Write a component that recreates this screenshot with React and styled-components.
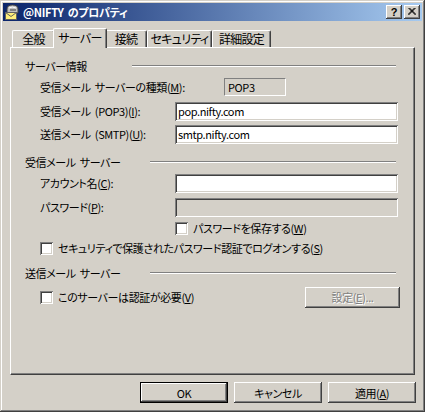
import React from "react";
import styled, { createGlobalStyle, css } from "styled-components";

const FACE = "#d4d0c8";

const GlobalStyle = createGlobalStyle`
  html, body { margin: 0; padding: 0; background: ${FACE}; }
  body {
    font-family: "Noto Sans CJK JP", "Noto Sans", sans-serif;
    font-size: 11px;
    letter-spacing: -0.4px;
    word-spacing: 2px;
    color: #000;
  }
  * { box-sizing: border-box; }
`;

// classic 3D bevels
const raised = css`
  box-shadow: inset -1px -1px #404040, inset 1px 1px #fff,
    inset -2px -2px #808080, inset 2px 2px ${FACE};
`;

const sunken = css`
  box-shadow: inset 1px 1px #808080, inset -1px -1px #fff,
    inset 2px 2px #404040, inset -2px -2px ${FACE};
`;

const Window = styled.div`
  width: 425px;
  height: 412px;
  padding: 3px;
  background: ${FACE};
  box-shadow: inset -1px -1px #404040, inset 1px 1px ${FACE},
    inset -2px -2px #808080, inset 2px 2px #fff;
  display: flex;
  flex-direction: column;
  font-feature-settings: "palt";
`;

const TitleBar = styled.div`
  height: 18px;
  display: flex;
  align-items: center;
  padding: 0 2px 0 1px;
  background: linear-gradient(to right, #0a246a, #a6caf0);
  color: #fff;
  font-weight: bold;
  font-size: 11px;
`;

const TitleText = styled.span`
  margin-left: 3px;
  flex: 1;
  letter-spacing: -0.3px;
`;

const CaptionButton = styled.div`
  width: 16px;
  height: 14px;
  margin-left: 2px;
  background: ${FACE};
  ${raised};
  display: flex;
  align-items: center;
  justify-content: center;
  color: #000;
  font-family: "Liberation Sans", sans-serif;
  font-size: 11px;
  font-weight: bold;
  letter-spacing: 0;
  padding-bottom: 1px;
`;

const Body = styled.div`
  flex: 1;
  display: flex;
  flex-direction: column;
  padding: 7px 7px 0 7px;
`;

const TabStrip = styled.div`
  height: 19px;
  display: flex;
  align-items: flex-end;
  padding-left: 2px;
`;

const Tab = styled.div`
  position: relative;
  z-index: ${(p) => (p.$active ? 1 : 0)};
  width: ${(p) => p.$w + (p.$active ? 4 : 0)}px;
  height: ${(p) => (p.$active ? 20 : 17)}px;
  margin: ${(p) => (p.$active ? "0 -2px -1px -2px" : "0")};
  background: ${FACE};
  border-left: 1px solid #fff;
  border-top: 1px solid #fff;
  border-right: 1px solid #404040;
  border-radius: 2px 2px 0 0;
  box-shadow: inset -1px 0 #808080;
  display: flex;
  justify-content: center;
  padding-top: ${(p) => (p.$active ? 1 : 0)}px;
  font-size: 12px;
  letter-spacing: -0.7px;
  line-height: 15px;
`;

const Panel = styled.div`
  height: 328px;
  background: ${FACE};
  border-top: 1px solid #fff;
  border-left: 1px solid #fff;
  border-right: 1px solid #404040;
  border-bottom: 1px solid #404040;
  box-shadow: inset -1px -1px #808080;
  padding: 8px 16px 0 14px;
  display: flex;
  flex-direction: column;
`;

const Row = styled.div`
  height: 20px;
  margin-top: ${(p) => p.$mt || 0}px;
  padding-left: ${(p) => p.$indent || 0}px;
  display: flex;
  align-items: center;
  white-space: nowrap;
`;

const GroupLabel = styled.span`
  width: ${(p) => p.$w}px;
`;

const Etched = styled.div`
  flex: 1;
  height: 2px;
  margin-right: 2px;
  border-top: 1px solid #808080;
  border-bottom: 1px solid #fff;
`;

const FieldLabel = styled.span`
  width: ${(p) => p.$w || 135}px;
`;

const Edit = styled.div`
  width: 223px;
  height: 19px;
  padding: 0 3px;
  line-height: 19px;
  background: ${(p) => (p.$disabled ? FACE : "#fff")};
  ${sunken};
`;

const Static = styled.div`
  width: 62px;
  height: 18px;
  padding-left: 3px;
  line-height: 16px;
  border-top: 1px solid #808080;
  border-left: 1px solid #808080;
  border-right: 1px solid #fff;
  border-bottom: 1px solid #fff;
`;

const Box = styled.div`
  width: 13px;
  height: 13px;
  background: #fff;
  ${sunken};
  flex: none;
`;

const CheckText = styled.span`
  margin-left: 5px;
`;

const Button = styled.div`
  width: ${(p) => p.$w || 88}px;
  height: 21px;
  background: ${FACE};
  ${raised};
  display: flex;
  align-items: center;
  justify-content: center;
  color: ${(p) => (p.$disabled ? "#808080" : "#000")};
  text-shadow: ${(p) => (p.$disabled ? "1px 1px #fff" : "none")};
  ${(p) =>
    p.$default &&
    css`
      border: 1px solid #000;
    `}
`;

const Footer = styled.div`
  display: flex;
  justify-content: flex-end;
  gap: 6px;
  margin: 7px -1px 0 0;
`;

const PushRight = styled.div`
  margin-left: auto;
  margin-right: -2px;
`;

const TitleIcon = () => (
  <svg width="16" height="16" viewBox="0 0 16 16">
    <path d="M3 8 V5 Q3 1 8.5 1 Q14 1 14 5 V9 H3 Z" fill="#c0c0c0" stroke="#404040" />
    <path d="M5 4 Q8 2 12 4" stroke="#fff" fill="none" />
    <rect x="6" y="5" width="6" height="2" fill="#808080" />
    <rect x="1.5" y="8.5" width="11" height="7" fill="#ffef7a" stroke="#606060" />
    <path d="M1.5 8.5 L7 12.5 L12.5 8.5" stroke="#606060" fill="none" />
  </svg>
);

const CloseGlyph = () => (
  <svg width="8" height="7" viewBox="0 0 8 7">
    <path d="M0.5 0 L7.5 7 M1.5 0 L8 6.5 M7.5 0 L0.5 7 M6.5 0 L0 6.5" stroke="#000" strokeWidth="1" />
  </svg>
);

const Check = ({ indent, mt, children }) => (
  <Row $indent={indent} $mt={mt}>
    <Box />
    <CheckText>{children}</CheckText>
  </Row>
);

export default function App() {
  return (
    <>
      <GlobalStyle />
      <Window>
        <TitleBar>
          <TitleIcon />
          <TitleText>@NIFTY のプロパティ</TitleText>
          <CaptionButton>?</CaptionButton>
          <CaptionButton>
            <CloseGlyph />
          </CaptionButton>
        </TitleBar>
        <Body>
          <TabStrip>
            <Tab $w={43}>全般</Tab>
            <Tab $w={50} $active>サーバー</Tab>
            <Tab $w={42}>接続</Tab>
            <Tab $w={65}>セキュリティ</Tab>
            <Tab $w={59}>詳細設定</Tab>
          </TabStrip>
          <Panel>
            <Row>
              <GroupLabel $w={107}>サーバー情報</GroupLabel>
              <Etched />
            </Row>
            <Row $mt={1} $indent={15}>
              <FieldLabel $w={184}>
                受信メール サーバーの種類(<u>M</u>):
              </FieldLabel>
              <Static>POP3</Static>
            </Row>
            <Row $mt={4} $indent={15}>
              <FieldLabel>
                受信メール (POP3)(<u>I</u>):
              </FieldLabel>
              <Edit>pop.nifty.com</Edit>
            </Row>
            <Row $mt={3} $indent={15}>
              <FieldLabel>
                送信メール (SMTP)(<u>U</u>):
              </FieldLabel>
              <Edit>smtp.nifty.com</Edit>
            </Row>
            <Row $mt={8}>
              <GroupLabel $w={125}>受信メール サーバー</GroupLabel>
              <Etched />
            </Row>
            <Row $mt={1} $indent={15}>
              <FieldLabel>
                アカウント名(<u>C</u>):
              </FieldLabel>
              <Edit />
            </Row>
            <Row $mt={4} $indent={15}>
              <FieldLabel>
                パスワード(<u>P</u>):
              </FieldLabel>
              <Edit $disabled />
            </Row>
            <Check indent={150} mt={1}>
              パスワードを保存する(<u>W</u>)
            </Check>
            <Check indent={15} mt={0}>
              セキュリティで保護されたパスワード認証でログオンする(<u>S</u>)
            </Check>
            <Row $mt={5}>
              <GroupLabel $w={125}>送信メール サーバー</GroupLabel>
              <Etched />
            </Row>
            <Row $mt={4} $indent={15}>
              <Box />
              <CheckText>
                このサーバーは認証が必要(<u>V</u>)
              </CheckText>
              <PushRight>
                <Button $w={95} $disabled>
                  設定(<u>E</u>)...
                </Button>
              </PushRight>
            </Row>
          </Panel>
          <Footer>
            <Button $default>OK</Button>
            <Button>キャンセル</Button>
            <Button>
              適用(<u>A</u>)
            </Button>
          </Footer>
        </Body>
      </Window>
    </>
  );
}
